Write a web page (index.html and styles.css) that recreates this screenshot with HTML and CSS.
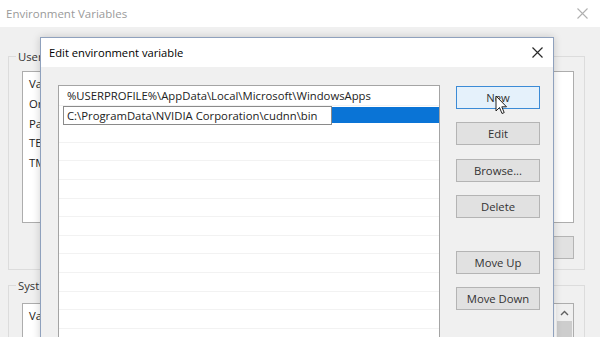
FILE: index.html
```html
<!DOCTYPE html>
<html lang="en">
<head>
    <meta charset="UTF-8">
    <title>Edit environment variable</title>
    <link rel="stylesheet" href="styles.css">
</head>
<body>
    <!-- Background window -->
    <div class="window back">
        <div class="titlebar">
            <span class="title">Environment Variables</span>
            <svg class="close" width="11" height="11" viewBox="0 0 11 11">
                <path d="M0.5 0.5 L10.5 10.5 M10.5 0.5 L0.5 10.5" stroke="#b0b0b0" stroke-width="1.1"/>
            </svg>
        </div>
        <div class="back-body">
            <fieldset class="group user-group">
                <legend>User</legend>
                <div class="var-list">
                    <div class="var-row head">Va</div>
                    <div class="var-row">On</div>
                    <div class="var-row">Pa</div>
                    <div class="var-row">TE</div>
                    <div class="var-row">TM</div>
                </div>
                <div class="group-buttons">
                    <span class="button small"></span>
                </div>
            </fieldset>
            <fieldset class="group sys-group">
                <legend>Syst</legend>
                <div class="var-list sys-list">
                    <div class="var-row head">Va</div>
                    <div class="scrollbar">
                        <svg class="arrow" width="9" height="6" viewBox="0 0 9 6">
                            <path d="M1 5 L4.5 1.5 L8 5" fill="none" stroke="#606060" stroke-width="1.4"/>
                        </svg>
                        <span class="thumb"></span>
                    </div>
                </div>
            </fieldset>
        </div>
    </div>

    <!-- Front dialog -->
    <div class="window dialog">
        <div class="titlebar">
            <span class="title">Edit environment variable</span>
            <svg class="close" width="11" height="11" viewBox="0 0 11 11">
                <path d="M0.5 0.5 L10.5 10.5 M10.5 0.5 L0.5 10.5" stroke="#2a2a2a" stroke-width="1.2"/>
            </svg>
        </div>
        <div class="dialog-body">
            <div class="path-list">
                <div class="path-row">%USERPROFILE%\AppData\Local\Microsoft\WindowsApps</div>
                <div class="path-row editing">
                    <span class="edit-box">C:\ProgramData\NVIDIA Corporation\cudnn\bin</span>
                    <span class="selection"></span>
                </div>
                <div class="path-row"></div>
                <div class="path-row"></div>
                <div class="path-row"></div>
                <div class="path-row"></div>
                <div class="path-row"></div>
                <div class="path-row"></div>
                <div class="path-row"></div>
                <div class="path-row"></div>
                <div class="path-row"></div>
                <div class="path-row"></div>
                <div class="path-row"></div>
            </div>
            <div class="side-buttons">
                <span class="button hover">New
                    <svg class="cursor" width="13" height="21" viewBox="0 0 13 21">
                        <path d="M1 1 L1 16 L4.5 12.5 L7 18.5 L9.2 17.6 L6.8 11.8 L11.5 11.8 Z" fill="#fff" stroke="#222" stroke-width="1" stroke-linejoin="round"/>
                    </svg>
                </span>
                <span class="button">Edit</span>
                <span class="button">Browse...</span>
                <span class="button">Delete</span>
                <span class="spacer"></span>
                <span class="button">Move Up</span>
                <span class="button">Move Down</span>
            </div>
        </div>
    </div>
</body>
</html>
```

FILE: styles.css
```css
body {
    margin: 0;
    width: 600px;
    height: 337px;
    overflow: hidden;
    position: relative;
    background-color: #f0f0f0;
    font-family: 'Open Sans', 'Noto Sans', sans-serif;
    font-size: 11.3px;
    color: #1e1e1e;
}

.window {
    box-sizing: border-box;
    background-color: #f0f0f0;
}

.titlebar {
    display: flex;
    align-items: center;
    justify-content: space-between;
    background-color: #ffffff;
}

/* Background window */
.back {
    width: 600px;
    height: 337px;
    overflow: hidden;
}

.back .titlebar {
    height: 27px;
    padding: 0 12px 0 6px;
}

.back .title {
    color: #9a9a9a;
    font-size: 11.5px;
}

.back-body {
    padding: 22px 15px 0 8px;
}

.group {
    margin: 0;
    padding: 7px 10px 0 13px;
    border: 1px solid #dcdcdc;
    min-width: 0;
}

.group legend {
    padding: 0 2px;
    margin-left: -6px;
    color: #333;
}

.user-group {
    height: 221px;
    box-sizing: border-box;
}

.var-list {
    height: 152px;
    background-color: #ffffff;
    border: 1px solid #adadad;
    box-sizing: border-box;
    padding: 2px 6px;
}

.var-row {
    height: 19.5px;
    line-height: 19.5px;
    color: #222;
}

.var-row.head {
    height: 20px;
    line-height: 20px;
}

.group-buttons {
    display: flex;
    justify-content: flex-end;
    margin-top: 13px;
}

.button.small {
    width: 75px;
}

.sys-group {
    margin-top: 8px;
    height: 80px;
    padding-top: 10px;
}

.sys-list {
    position: relative;
    height: 60px;
}

.scrollbar {
    position: absolute;
    top: 0;
    right: 0;
    width: 17px;
    height: 100%;
    background-color: #f0f0f0;
    display: flex;
    flex-direction: column;
    align-items: center;
}

.scrollbar .arrow {
    margin: 6px 0 5px;
}

.scrollbar .thumb {
    width: 15px;
    flex: 1;
    background-color: #cdcdcd;
}

/* Front dialog */
.dialog {
    position: absolute;
    left: 40px;
    top: 37px;
    width: 514px;
    height: 320px;
    border: 1px solid #8fa1bd;
    box-shadow: 0 0 8px rgba(0, 0, 0, 0.18);
}

.dialog .titlebar {
    height: 29px;
    padding: 0 10px 0 8px;
}

.dialog .title {
    color: #000;
    font-size: 11.2px;
}

.dialog-body {
    display: flex;
    align-items: flex-start;
    gap: 16px;
    padding: 18px 13px 0 17px;
}

.path-list {
    width: 382px;
    height: 300px;
    box-sizing: border-box;
    background-color: #ffffff;
    border: 1px solid #a4a4a4;
    padding-top: 1px;
}

.path-row {
    height: 18.6px;
    box-sizing: border-box;
    border-bottom: 1px solid #f2f2f2;
    padding-left: 8px;
    line-height: 18px;
    white-space: nowrap;
    color: #222;
}

.path-row.editing {
    display: flex;
    padding-left: 4px;
    border-bottom: none;
}

.edit-box {
    box-sizing: border-box;
    width: 269px;
    height: 19px;
    border: 1px solid #8a8a8a;
    padding-left: 3px;
    line-height: 17px;
    background-color: #fff;
    overflow: hidden;
}

.selection {
    flex: 1;
    margin: 1px 0;
    background-color: #0a74d6;
}

.side-buttons {
    display: flex;
    flex-direction: column;
    gap: 13.3px;
    width: 84px;
    padding-top: 1px;
}

.spacer {
    height: 6.4px;
}

.button {
    position: relative;
    box-sizing: border-box;
    height: 23px;
    display: flex;
    align-items: center;
    justify-content: center;
    background-color: #e1e1e1;
    border: 1px solid #b4b4b4;
    color: #333;
}

.button.hover {
    background-color: #e5f1fb;
    border-color: #3c8bd6;
}

.cursor {
    position: absolute;
    left: 38px;
    top: 8px;
}
```
